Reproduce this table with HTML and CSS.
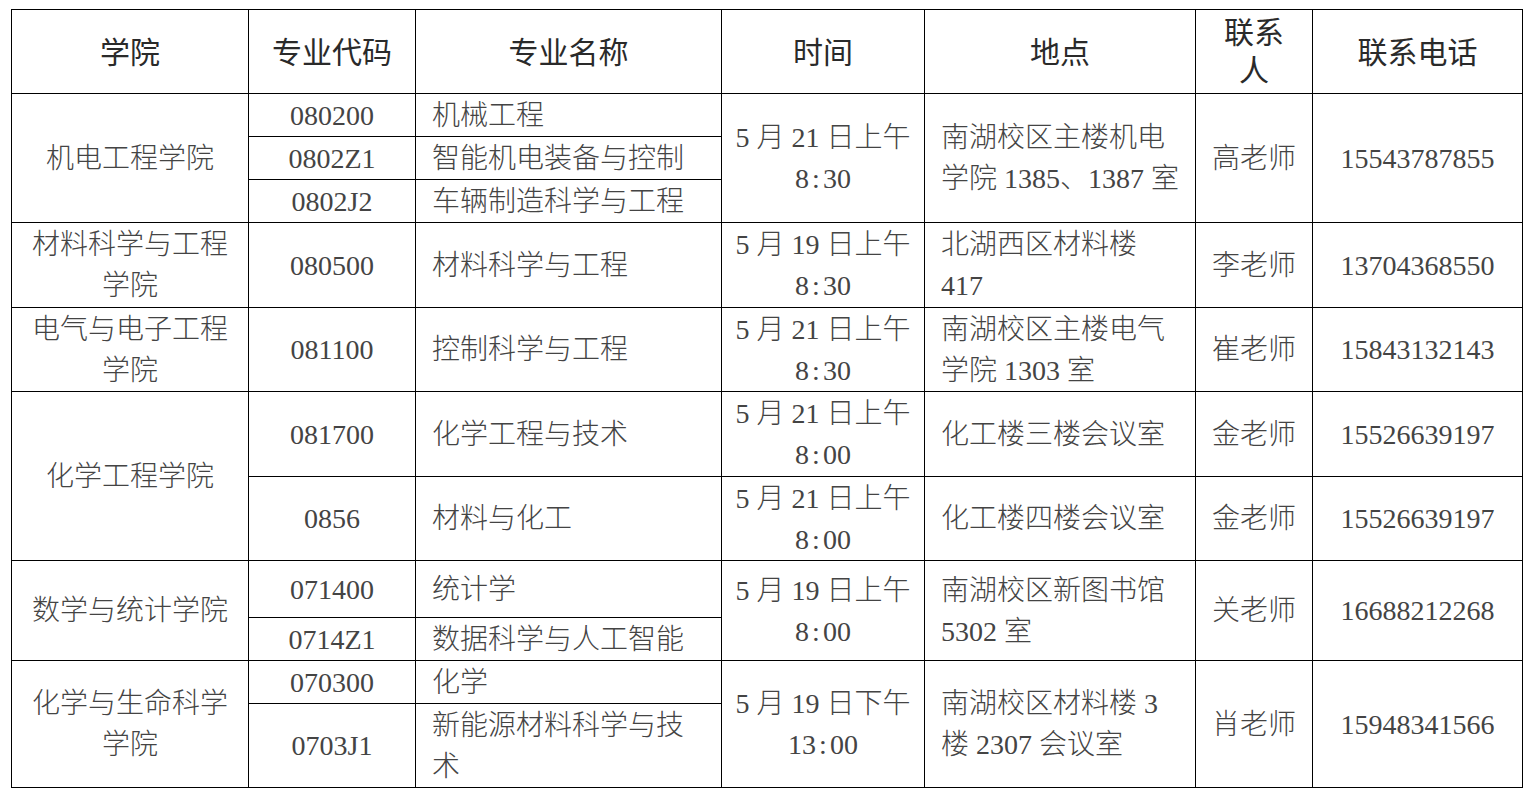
FILE: index.html
```html
<!DOCTYPE html>
<html lang="zh-CN">
<head>
<meta charset="utf-8">
<title>复试安排</title>
<link rel="stylesheet" href="styles.css">
</head>
<body>
<div class="page">
<table class="schedule">
  <colgroup>
    <col class="c1"><col class="c2"><col class="c3"><col class="c4"><col class="c5"><col class="c6"><col class="c7">
  </colgroup>
  <thead>
    <tr class="head">
      <th>学院</th><th>专业代码</th><th>专业名称</th><th>时间</th><th>地点</th><th class="narrow">联系人</th><th>联系电话</th>
    </tr>
  </thead>
  <tbody>
    <tr class="h43">
      <td class="ctr" rowspan="3">机电工程学院</td>
      <td class="ctr">080200</td>
      <td class="lft">机械工程</td>
      <td class="ctr time" rowspan="3">5 月 21 日上午<br>8<span class="colon">:</span>30</td>
      <td class="lft" rowspan="3">南湖校区主楼机电学院 1385、1387 室</td>
      <td class="ctr" rowspan="3">高老师</td>
      <td class="ctr" rowspan="3">15543787855</td>
    </tr>
    <tr class="h43">
      <td class="ctr">0802Z1</td>
      <td class="lft">智能机电装备与控制</td>
    </tr>
    <tr class="h43">
      <td class="ctr">0802J2</td>
      <td class="lft">车辆制造科学与工程</td>
    </tr>
    <tr class="h85">
      <td class="ctr">材料科学与工程学院</td>
      <td class="ctr">080500</td>
      <td class="lft">材料科学与工程</td>
      <td class="ctr time">5 月 19 日上午<br>8<span class="colon">:</span>30</td>
      <td class="lft">北湖西区材料楼 417</td>
      <td class="ctr">李老师</td>
      <td class="ctr">13704368550</td>
    </tr>
    <tr class="h84">
      <td class="ctr">电气与电子工程学院</td>
      <td class="ctr">081100</td>
      <td class="lft">控制科学与工程</td>
      <td class="ctr time">5 月 21 日上午<br>8<span class="colon">:</span>30</td>
      <td class="lft">南湖校区主楼电气学院 1303 室</td>
      <td class="ctr">崔老师</td>
      <td class="ctr">15843132143</td>
    </tr>
    <tr class="h85">
      <td class="ctr" rowspan="2">化学工程学院</td>
      <td class="ctr">081700</td>
      <td class="lft">化学工程与技术</td>
      <td class="ctr time">5 月 21 日上午<br>8<span class="colon">:</span>00</td>
      <td class="lft">化工楼三楼会议室</td>
      <td class="ctr">金老师</td>
      <td class="ctr">15526639197</td>
    </tr>
    <tr class="h84">
      <td class="ctr">0856</td>
      <td class="lft">材料与化工</td>
      <td class="ctr time">5 月 21 日上午<br>8<span class="colon">:</span>00</td>
      <td class="lft">化工楼四楼会议室</td>
      <td class="ctr">金老师</td>
      <td class="ctr">15526639197</td>
    </tr>
    <tr class="h57">
      <td class="ctr" rowspan="2">数学与统计学院</td>
      <td class="ctr">071400</td>
      <td class="lft">统计学</td>
      <td class="ctr time" rowspan="2">5 月 19 日上午<br>8<span class="colon">:</span>00</td>
      <td class="lft" rowspan="2">南湖校区新图书馆 5302 室</td>
      <td class="ctr" rowspan="2">关老师</td>
      <td class="ctr" rowspan="2">16688212268</td>
    </tr>
    <tr class="h43">
      <td class="ctr">0714Z1</td>
      <td class="lft">数据科学与人工智能</td>
    </tr>
    <tr class="h43">
      <td class="ctr" rowspan="2">化学与生命科学学院</td>
      <td class="ctr">070300</td>
      <td class="lft">化学</td>
      <td class="ctr time" rowspan="2">5 月 19 日下午<br>13<span class="colon">:</span>00</td>
      <td class="lft" rowspan="2">南湖校区材料楼 3 楼 2307 会议室</td>
      <td class="ctr" rowspan="2">肖老师</td>
      <td class="ctr" rowspan="2">15948341566</td>
    </tr>
    <tr class="h84">
      <td class="ctr">0703J1</td>
      <td class="lft">新能源材料科学与技术</td>
    </tr>
  </tbody>
</table>
</div>
</body>
</html>
```

FILE: styles.css
```css
html, body {
  margin: 0;
  padding: 0;
  background: #ffffff;
}

.page {
  padding: 9px 0 0 11px;
}

.schedule {
  border-collapse: collapse;
  table-layout: fixed;
  width: 1511px;
  font-family: "Liberation Serif", "Noto Sans CJK SC", serif;
  font-size: 28px;
  color: #444444;
}

.c1 { width: 237px; }
.c2 { width: 167px; }
.c3 { width: 306px; }
.c4 { width: 203px; }
.c5 { width: 271px; }
.c6 { width: 117px; }
.c7 { width: 210px; }

.schedule th,
.schedule td {
  border: 1.5px solid #000000;
  padding: 0 16px;
  vertical-align: middle;
  line-height: 41px;
  overflow-wrap: anywhere;
}

.schedule th {
  font-family: "Noto Sans CJK SC", "Noto Sans", sans-serif;
  font-weight: 400;
  font-size: 30px;
  color: #2a2a2a;
  line-height: 38px;
  text-align: center;
  padding-bottom: 4px;
}

.schedule th.narrow {
  padding: 0 24px 5px;
}

.schedule td {
  font-weight: 300;
}

.head { height: 84px; }
.h43 { height: 43px; }
.h57 { height: 57px; }
.h84 { height: 84px; }
.h85 { height: 85px; }

.ctr { text-align: center; }
.lft { text-align: left; }

.schedule td.time {
  padding: 0 6px;
}

.colon {
  display: inline-block;
  padding: 0 3px;
}
```
